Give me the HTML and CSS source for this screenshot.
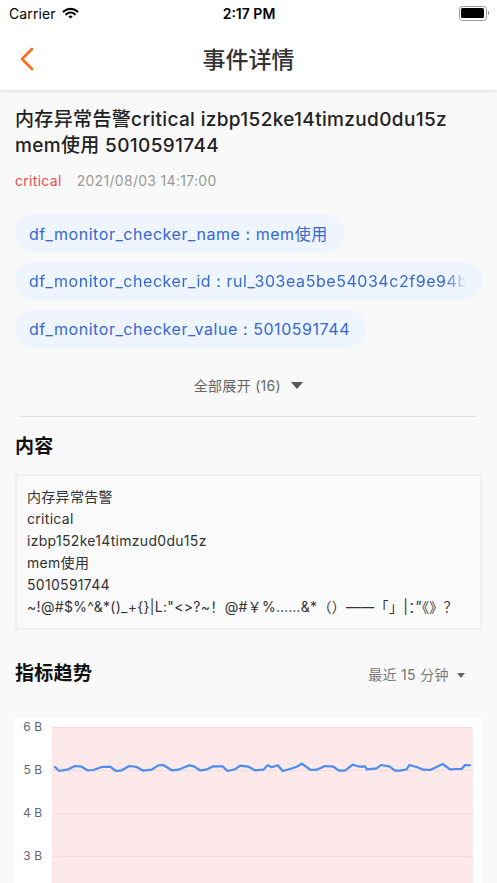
FILE: index.html
```html
<!DOCTYPE html>
<html lang="zh-CN">
<head>
    <meta charset="UTF-8">
    <meta name="viewport" content="width=device-width, initial-scale=1.0">
    <title>事件详情</title>
    <link rel="stylesheet" href="styles.css">
</head>
<body>
    <div class="top">
        <div class="status-bar">
            <div class="carrier">
                Carrier
                <svg class="wifi" width="17" height="12" viewBox="0 0 17 12">
                    <path d="M1.6 4.6 A10 10 0 0 1 15.4 4.6" fill="none" stroke="#000" stroke-width="2.1" stroke-linecap="round"/>
                    <path d="M4.2 7.3 A6.2 6.2 0 0 1 12.8 7.3" fill="none" stroke="#000" stroke-width="2.1" stroke-linecap="round"/>
                    <path d="M8.5 11.6 L6.3 9.5 A3.1 3.1 0 0 1 10.7 9.5 Z" fill="#000"/>
                </svg>
            </div>
            <div class="clock">2:17 PM</div>
            <div class="battery">
                <span class="battery-body"><span class="battery-level"></span></span>
                <span class="battery-cap"></span>
            </div>
        </div>
        <header class="nav-bar">
            <a class="back" href="#">
                <svg width="14" height="24" viewBox="0 0 14 24">
                    <path d="M12 2 L2 12 L12 22" fill="none" stroke="#ff6a13" stroke-width="2.6" stroke-linecap="round" stroke-linejoin="round"/>
                </svg>
            </a>
            <h1 class="nav-title">事件详情</h1>
        </header>
    </div>

    <main class="page">
        <h2 class="event-title">内存异常告警critical izbp152ke14timzud0du15z mem使用 5010591744</h2>
        <div class="event-meta">
            <span class="level">critical</span>
            <span class="date">2021/08/03 14:17:00</span>
        </div>

        <div class="tags">
            <span class="tag"><span class="tag-text">df_monitor_checker_name : mem使用</span></span>
            <span class="tag tag-long"><span class="tag-text">df_monitor_checker_id : rul_303ea5be54034c2f9e94bd2a1c7e6f08</span></span>
            <span class="tag"><span class="tag-text">df_monitor_checker_value : 5010591744</span></span>
        </div>

        <div class="expand">全部展开 (16) <span class="caret"></span></div>
        <hr class="divider">

        <h3 class="section-title">内容</h3>
        <div class="content-box">
            <div>内存异常告警</div>
            <div>critical</div>
            <div>izbp152ke14timzud0du15z</div>
            <div>mem使用</div>
            <div>5010591744</div>
            <div>~!@#$%^&amp;*()_+{}|L:"&lt;&gt;?~！@#￥%……&amp;*（）——「」|：”《》？</div>
        </div>

        <div class="section-head">
            <h3 class="section-title">指标趋势</h3>
            <div class="range">最近 15 分钟 <span class="caret caret-small"></span></div>
        </div>

        <div class="chart-card">
            <svg class="chart" width="467" height="260" viewBox="0 0 467 260">
                <rect x="37" y="10" width="421" height="215" fill="#fde9e9"/>
                <g stroke="#f8d9d9" stroke-width="1">
                    <line x1="37" y1="10.5" x2="458" y2="10.5"/>
                    <line x1="37" y1="53.5" x2="458" y2="53.5"/>
                    <line x1="37" y1="96.5" x2="458" y2="96.5"/>
                    <line x1="37" y1="139.5" x2="458" y2="139.5"/>
                    <line x1="37" y1="182.5" x2="458" y2="182.5"/>
                </g>
                <g class="axis-label" text-anchor="end">
                    <text x="27" y="14">6 B</text>
                    <text x="27" y="57">5 B</text>
                    <text x="27" y="100">4 B</text>
                    <text x="27" y="143">3 B</text>
                    <text x="27" y="186">2 B</text>
                </g>
                <polyline fill="none" stroke="#4a8cf6" stroke-width="2.2" stroke-linejoin="round" stroke-linecap="round"
                    points="40,50 44.3,54 53.3,52.3 60,49 66.7,49.7 72.3,53.3 78.3,53 86.7,50 95,49.7 101,54 106.7,53.3 114.3,49 121.7,50 128.3,53.7 136.7,52.7 143.3,48.3 148.3,48 156.7,53.3 163.3,52.7 174.3,48.3 179,49.3 185,53.3 191,52.7 198.3,49.3 207.7,49.3 212.3,54 220,52.3 225,48.7 233.3,49.7 240,53.3 248.3,52.7 252.7,48.3 256.7,50.3 262.7,48.3 267.7,54 275,52 281.7,49.7 286.7,46.7 295.7,53 301.7,52.7 310,49 318.3,49.7 324,53.7 330,53.7 337.7,47.7 345,49.7 350,49.3 351.7,52.3 361.7,51.3 366,48 374.3,49.3 380,53.7 385,53.7 391.7,52.3 394.3,48 401.7,50 408.3,52.7 415,53 420,50.7 427.7,47 435,52.3 441,52 446.7,52 450,48 455,48.3"/>
            </svg>
        </div>
    </main>
</body>
</html>
```

FILE: styles.css
```css
body {
    margin: 0;
    background-color: #f9f9f9;
    font-family: "Inter", "Noto Sans CJK SC", sans-serif;
    color: #222;
    overflow: hidden;
}
.top {
    background: white;
    box-shadow: 0 1px 4px rgba(0, 0, 0, 0.12);
}
.status-bar {
    height: 26px;
    display: flex;
    align-items: center;
    justify-content: space-between;
    padding: 0 8px 0 9px;
    font-size: 14px;
    color: #000;
}
.carrier {
    flex: 1;
    display: flex;
    align-items: center;
    gap: 6px;
    letter-spacing: 0.1px;
}
.clock {
    font-weight: 600;
    font-size: 14px;
}
.battery {
    flex: 1;
    display: flex;
    align-items: center;
    justify-content: flex-end;
    gap: 1px;
}
.battery-body {
    width: 23px;
    height: 10px;
    padding: 1.5px;
    border: 1px solid #9a9a9a;
    border-radius: 3.5px;
    display: flex;
}
.battery-level {
    flex: 1;
    background: #000;
    border-radius: 1.5px;
}
.battery-cap {
    width: 1.5px;
    height: 4px;
    background: #9a9a9a;
    border-radius: 0 1px 1px 0;
}
.nav-bar {
    height: 64px;
    display: flex;
    align-items: center;
    justify-content: center;
    position: relative;
}
.back {
    position: absolute;
    left: 20px;
    top: 21px;
    display: flex;
}
.nav-title {
    margin: 0;
    font-size: 23px;
    font-weight: 500;
    color: #333;
}
.page {
    padding: 17px 15px 0;
    letter-spacing: 0.3px;
}
.event-title {
    margin: 0;
    font-size: 19px;
    line-height: 26px;
    font-weight: 500;
    letter-spacing: 0.35px;
    color: #222;
}
.event-meta {
    margin-top: 12px;
    font-size: 14px;
    line-height: 20px;
    display: flex;
    gap: 15px;
}
.level {
    color: #f04d4d;
}
.date {
    color: #999;
}
.tags {
    margin-top: 23px;
    display: flex;
    flex-direction: column;
    align-items: flex-start;
    gap: 10px;
}
.tag {
    height: 38px;
    max-width: 100%;
    box-sizing: border-box;
    padding: 0 16px 0 14px;
    border-radius: 19px;
    background: #eef5ff;
    color: #3768d2;
    font-size: 16px;
    letter-spacing: 0.55px;
    display: flex;
    align-items: center;
    overflow: hidden;
}
.tag-text {
    white-space: nowrap;
    overflow: hidden;
}
.tag-long {
    padding-right: 15px;
}
.tag-long .tag-text {
    -webkit-mask-image: linear-gradient(to right, #000 calc(100% - 22px), transparent);
    mask-image: linear-gradient(to right, #000 calc(100% - 22px), transparent);
}
.expand {
    margin-top: 28px;
    text-align: center;
    font-size: 14px;
    line-height: 20px;
    color: #666;
}
.caret {
    display: inline-block;
    width: 0;
    height: 0;
    margin-left: 6px;
    border-left: 6px solid transparent;
    border-right: 6px solid transparent;
    border-top: 7px solid #555;
    vertical-align: 2px;
}
.caret-small {
    margin-left: 4px;
    border-left-width: 4.5px;
    border-right-width: 4.5px;
    border-top-width: 5px;
    border-top-color: #666;
}
.divider {
    margin: 20px 5px 0;
    border: none;
    border-top: 1px solid #e0e0e0;
}
.section-title {
    margin: 17px 0 0;
    font-size: 19px;
    line-height: 26px;
    font-weight: 600;
    color: #111;
}
.content-box {
    margin-top: 14px;
    padding: 10px 10px;
    border: 2px solid #f0f0f0;
    background: #fafafa;
    font-size: 14px;
    line-height: 22px;
    color: #333;
}
.section-head {
    margin-top: 31px;
    display: flex;
    align-items: center;
    justify-content: space-between;
    padding-right: 17px;
}
.section-head .section-title {
    margin: 0;
}
.range {
    font-size: 14px;
    color: #777;
}
.chart-card {
    margin-top: 30px;
    background: white;
    height: 260px;
}
.chart {
    display: block;
}
.axis-label {
    font-size: 12px;
    letter-spacing: 0;
    fill: #666;
}
```
